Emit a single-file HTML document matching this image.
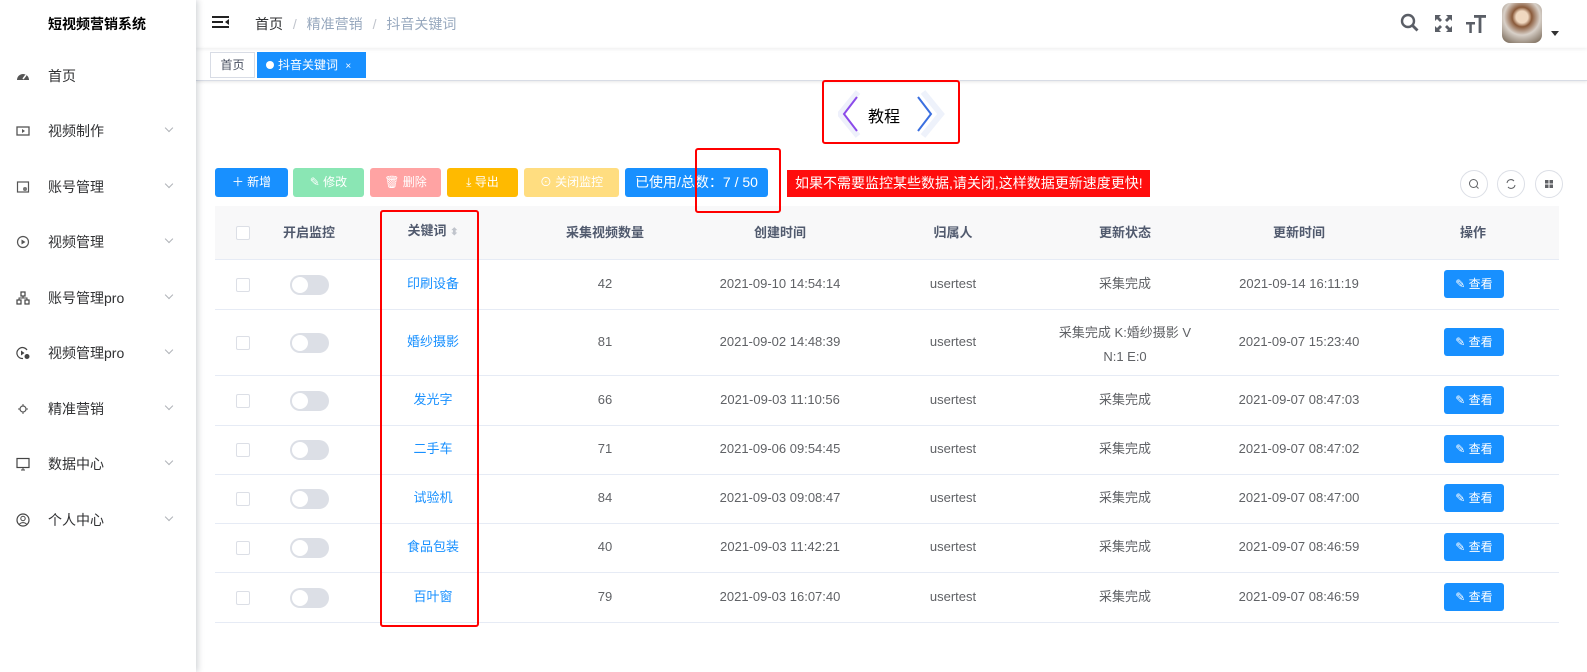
<!DOCTYPE html>
<html><head><meta charset="utf-8"><style>
*{margin:0;padding:0;box-sizing:border-box}
body{width:1587px;height:672px;overflow:hidden;background:#fff;font-family:"Liberation Sans","Noto Sans CJK SC",sans-serif;font-size:13px;color:#606266;position:relative}
.a{position:absolute}
.side{left:0;top:0;width:196px;height:672px;background:#fff;box-shadow:2px 0 6px rgba(0,21,41,.18);z-index:2}
.mi{position:absolute;left:0;width:196px;height:20px;line-height:20px}
.mi .t{position:absolute;left:48px;font-size:14px;color:#303133}
.mi .ic{position:absolute;left:16px;top:3px;width:14px;height:14px}
.mi .ch{position:absolute;left:166px;top:4px;width:6px;height:6px;border-right:1px solid #b0b3b8;border-bottom:1px solid #b0b3b8;transform:rotate(45deg)}
.btn{position:absolute;top:168px;height:29px;line-height:29px;color:#fff;font-size:12px;border-radius:3px;text-align:center}
.td{position:absolute;text-align:center;color:#606266;font-size:13px;line-height:18px}
.cb{position:absolute;left:236px;width:14px;height:14px;border:1px solid #dcdfe6;border-radius:2px;background:#fff}
.sw{position:absolute;left:290px;width:39px;height:20px;border-radius:10px;background:#dcdfe6}
.sw:after{content:"";position:absolute;left:2px;top:2px;width:16px;height:16px;border-radius:50%;background:#fff}
.kw{color:#1890ff}
.vb{position:absolute;left:1444px;width:60px;height:28px;line-height:28px;background:#1890ff;color:#fff;border-radius:3px;font-size:12px;text-align:center}
.hl{position:absolute;left:215px;width:1344px;height:1px;background:#e6ebf5}
.rb{position:absolute;border:2px solid #f00;border-radius:3px;z-index:3}
.cir{position:absolute;top:170px;width:28px;height:28px;border:1px solid #dcdfe6;border-radius:50%}
</style></head><body>
<div class="a side">
<div class="a" style="left:48px;top:14px;font-size:14px;font-weight:bold;color:#000">短视频营销系统</div>
<div class="mi" style="top:66px"><svg class="ic" viewBox="0 0 14 14"><path d="M1 11a6 6 0 1 1 12 0z" fill="#555"/><path d="M7 10l3-4" stroke="#fff" stroke-width="1.5"/></svg><span class="t">首页</span></div>
<div class="mi" style="top:121px"><svg class="ic" viewBox="0 0 14 14"><rect x="1" y="3" width="12" height="8" fill="none" stroke="#555" stroke-width="1.3"/><path d="M6 5v4l3-2z" fill="#555"/></svg><span class="t">视频制作</span><i class="ch"></i></div>
<div class="mi" style="top:177px"><svg class="ic" viewBox="0 0 14 14"><rect x="1.5" y="2" width="11" height="10" fill="none" stroke="#555" stroke-width="1.2"/><circle cx="9" cy="9" r="2" fill="#777"/></svg><span class="t">账号管理</span><i class="ch"></i></div>
<div class="mi" style="top:232px"><svg class="ic" viewBox="0 0 14 14"><circle cx="7" cy="7" r="5.5" fill="none" stroke="#555" stroke-width="1.2"/><path d="M5.5 4.5v5l4-2.5z" fill="#555"/></svg><span class="t">视频管理</span><i class="ch"></i></div>
<div class="mi" style="top:288px"><svg class="ic" viewBox="0 0 14 14"><rect x="5" y="1" width="4" height="4" fill="none" stroke="#444" stroke-width="1.2"/><rect x="1" y="9" width="4" height="4" fill="none" stroke="#444" stroke-width="1.2"/><rect x="9" y="9" width="4" height="4" fill="none" stroke="#444" stroke-width="1.2"/><path d="M7 5v2M3 9V7h8v2" fill="none" stroke="#444"/></svg><span class="t">账号管理pro</span><i class="ch"></i></div>
<div class="mi" style="top:343px"><svg class="ic" viewBox="0 0 14 14"><path d="M11 4A5.5 5.5 0 1 0 7 12.5" fill="none" stroke="#444" stroke-width="1.2"/><path d="M5 4.5v5l3.5-2.5z" fill="#444"/><circle cx="11" cy="10.5" r="2.5" fill="#444"/></svg><span class="t">视频管理pro</span><i class="ch"></i></div>
<div class="mi" style="top:399px"><svg class="ic" viewBox="0 0 14 14"><circle cx="7" cy="7" r="3" fill="none" stroke="#555" stroke-width="1.2"/><path d="M7 2v2M7 10v2M2 7h2M10 7h2" stroke="#555"/></svg><span class="t">精准营销</span><i class="ch"></i></div>
<div class="mi" style="top:454px"><svg class="ic" viewBox="0 0 14 14"><rect x="1" y="1.5" width="12" height="9" fill="none" stroke="#444" stroke-width="1.2"/><path d="M5 13h4M7 10.5V13" stroke="#444"/></svg><span class="t">数据中心</span><i class="ch"></i></div>
<div class="mi" style="top:510px"><svg class="ic" viewBox="0 0 14 14"><circle cx="7" cy="7" r="6" fill="none" stroke="#444" stroke-width="1.2"/><circle cx="7" cy="5.5" r="2.2" fill="none" stroke="#444"/><path d="M3.3 11.3a4.5 4 0 0 1 7.4 0" fill="none" stroke="#444"/></svg><span class="t">个人中心</span><i class="ch"></i></div>
</div>
<!-- header -->
<div class="a" style="left:196px;top:0;width:1391px;height:48px;box-shadow:0 1px 4px rgba(0,21,41,.08)"></div>
<svg class="a" style="left:212px;top:15px" width="18" height="16" viewBox="0 0 18 16"><path d="M0 2h17M0 7h11M0 12h17" stroke="#222" stroke-width="2"/><path d="M17 4v6l-4-3z" fill="#222"/></svg>
<div class="a" style="left:255px;top:14px;font-size:14px;color:#303133">首页 <span style="color:#c0c4cc;margin:0 6px">/</span> <span style="color:#97a8be">精准营销</span> <span style="color:#c0c4cc;margin:0 6px">/</span> <span style="color:#97a8be">抖音关键词</span></div>
<svg class="a" style="left:1400px;top:13px" width="20" height="20" viewBox="0 0 20 20"><circle cx="8" cy="8" r="6" fill="none" stroke="#5a5e66" stroke-width="2.4"/><path d="M12.5 12.5l5 5" stroke="#5a5e66" stroke-width="2.8"/></svg>
<svg class="a" style="left:1434px;top:14px" width="19" height="19" viewBox="0 0 19 19" fill="#5a5e66"><path d="M1 1h6l-2 2 3 3-2 2-3-3-2 2zM18 1v6l-2-2-3 3-2-2 3-3-2-2zM1 18v-6l2 2 3-3 2 2-3 3 2 2zM18 18h-6l2-2-3-3 2-2 3 3 2-2z"/></svg>
<svg class="a" style="left:1466px;top:15px" width="20" height="18" viewBox="0 0 20 18" fill="#5a5e66"><rect x="0" y="7" width="9" height="2.5"/><rect x="3.3" y="7" width="2.5" height="11"/><rect x="8" y="0" width="12" height="2.8"/><rect x="12.6" y="0" width="2.8" height="18"/></svg>
<div class="a" style="left:1502px;top:3px;width:40px;height:40px;border-radius:8px;background:radial-gradient(circle at 50% 35%,#f0d8c0 0 18%,#8a5a3a 30%,#d8d0c8 55%,#6b5a48 100%)"></div>
<div class="a" style="left:1551px;top:31px;width:0;height:0;border-left:4px solid transparent;border-right:4px solid transparent;border-top:5px solid #333"></div>
<!-- tags -->
<div class="a" style="left:196px;top:48px;width:1391px;height:33px;border-bottom:1px solid #d8dce5;box-shadow:0 1px 3px rgba(0,0,0,.1)"></div>
<div class="a" style="left:210px;top:52px;width:45px;height:26px;line-height:24px;border:1px solid #d8dce5;font-size:12px;color:#495060;text-align:center">首页</div>
<div class="a" style="left:257px;top:52px;width:109px;height:26px;line-height:26px;background:#1890ff;color:#fff;font-size:12px;padding-left:9px"><span style="display:inline-block;width:8px;height:8px;border-radius:50%;background:#fff;margin-right:4px"></span>抖音关键词 <span style="font-size:10px;margin-left:4px">×</span></div>
<!-- tutorial -->
<div class="rb" style="left:822px;top:80px;width:138px;height:64px"></div>
<svg class="a" style="left:838px;top:90px" width="110" height="48" viewBox="0 0 110 48"><path d="M20 2L2 24l18 22" fill="none" stroke="#eef0fb" stroke-width="6"/><path d="M19 7L6 24l13 17" fill="none" stroke="#8b4bea" stroke-width="2"/><path d="M85 2l18 22-18 22" fill="none" stroke="#eef2fb" stroke-width="6"/><path d="M80 7l13 17-13 17" fill="none" stroke="#3a6fe0" stroke-width="2"/></svg>
<div class="a" style="left:868px;top:103px;font-size:16px;color:#000">教程</div>
<!-- buttons -->
<div class="btn" style="left:215px;width:73px;background:#1890ff">＋ 新增</div>
<div class="btn" style="left:293px;width:71px;background:#8ae6b4">✎ 修改</div>
<div class="btn" style="left:370px;width:71px;background:#ffa3a3">🗑 删除</div>
<div class="btn" style="left:447px;width:71px;background:#ffba00">⤓ 导出</div>
<div class="btn" style="left:524px;width:95px;background:#ffdd80">⊙ 关闭监控</div>
<div class="btn" style="left:625px;width:143px;background:#1890ff;font-size:14px">已使用/总数：7 / 50</div>
<div class="rb" style="left:695px;top:148px;width:86px;height:65px"></div>
<div class="a" style="left:787px;top:170px;width:363px;height:27px;line-height:27px;background:#ff0d0d;color:#fff;font-size:14px;padding-left:8px">如果不需要监控某些数据,请关闭,这样数据更新速度更快!</div>
<div class="cir" style="left:1460px"><svg width="26" height="26" viewBox="0 0 26 26"><circle cx="12.5" cy="12.5" r="4" fill="none" stroke="#606266"/><path d="M15.5 15.5l2 2" stroke="#606266"/></svg></div>
<div class="cir" style="left:1497px"><svg width="26" height="26" viewBox="0 0 26 26"><path d="M9 12a4 4 0 0 1 7-2M17 14a4 4 0 0 1-7 2" fill="none" stroke="#606266"/></svg></div>
<div class="cir" style="left:1535px"><svg width="26" height="26" viewBox="0 0 26 26" fill="#606266"><rect x="9" y="9" width="3.5" height="3.5"/><rect x="13.5" y="9" width="3.5" height="3.5"/><rect x="9" y="13.5" width="3.5" height="3.5"/><rect x="13.5" y="13.5" width="3.5" height="3.5"/></svg></div>
<!-- table -->
<div class="a" style="left:215px;top:206px;width:1344px;height:53px;background:#f8f8f9"></div>
<div class="hl" style="top:259px"></div><div class="hl" style="top:309px"></div><div class="hl" style="top:375px"></div><div class="hl" style="top:425px"></div><div class="hl" style="top:474px"></div><div class="hl" style="top:523px"></div><div class="hl" style="top:572px"></div><div class="hl" style="top:622px"></div>
<div class="cb" style="top:226px"></div>
<div class="td" style="left:259px;width:100px;top:224px;font-weight:bold;color:#515a6e">开启监控</div>
<div class="td" style="left:383px;width:100px;top:222px;font-weight:bold;color:#515a6e">关键词 <span style="color:#c0c4cc;font-size:10px">⬍</span></div>
<div class="td" style="left:545px;width:120px;top:224px;font-weight:bold;color:#515a6e">采集视频数量</div>
<div class="td" style="left:720px;width:120px;top:224px;font-weight:bold;color:#515a6e">创建时间</div>
<div class="td" style="left:903px;width:100px;top:224px;font-weight:bold;color:#515a6e">归属人</div>
<div class="td" style="left:1055px;width:140px;top:224px;font-weight:bold;color:#515a6e">更新状态</div>
<div class="td" style="left:1229px;width:140px;top:224px;font-weight:bold;color:#515a6e">更新时间</div>
<div class="td" style="left:1423px;width:100px;top:224px;font-weight:bold;color:#515a6e">操作</div>
<div class="rb" style="left:380px;top:210px;width:99px;height:417px"></div>

<!-- rows -->
<div class="cb" style="top:278px"></div><div class="sw" style="top:275px"></div><div class="td kw" style="left:383px;width:100px;top:275px">印刷设备</div><div class="td" style="left:555px;width:100px;top:275px">42</div><div class="td" style="left:700px;width:160px;top:275px">2021-09-10 14:54:14</div><div class="td" style="left:903px;width:100px;top:275px">usertest</div><div class="td" style="left:1040px;width:170px;top:275px">采集完成</div><div class="td" style="left:1219px;width:160px;top:275px">2021-09-14 16:11:19</div><div class="vb" style="top:270px">✎ 查看</div>

<div class="cb" style="top:336px"></div><div class="sw" style="top:333px"></div><div class="td kw" style="left:383px;width:100px;top:333px">婚纱摄影</div><div class="td" style="left:555px;width:100px;top:333px">81</div><div class="td" style="left:700px;width:160px;top:333px">2021-09-02 14:48:39</div><div class="td" style="left:903px;width:100px;top:333px">usertest</div><div class="td" style="left:1050px;width:150px;top:321px;line-height:24px">采集完成 K:婚纱摄影 V<br>N:1 E:0</div><div class="td" style="left:1219px;width:160px;top:333px">2021-09-07 15:23:40</div><div class="vb" style="top:328px">✎ 查看</div>

<div class="cb" style="top:394px"></div><div class="sw" style="top:391px"></div><div class="td kw" style="left:383px;width:100px;top:391px">发光字</div><div class="td" style="left:555px;width:100px;top:391px">66</div><div class="td" style="left:700px;width:160px;top:391px">2021-09-03 11:10:56</div><div class="td" style="left:903px;width:100px;top:391px">usertest</div><div class="td" style="left:1040px;width:170px;top:391px">采集完成</div><div class="td" style="left:1219px;width:160px;top:391px">2021-09-07 08:47:03</div><div class="vb" style="top:386px">✎ 查看</div>

<div class="cb" style="top:443px"></div><div class="sw" style="top:440px"></div><div class="td kw" style="left:383px;width:100px;top:440px">二手车</div><div class="td" style="left:555px;width:100px;top:440px">71</div><div class="td" style="left:700px;width:160px;top:440px">2021-09-06 09:54:45</div><div class="td" style="left:903px;width:100px;top:440px">usertest</div><div class="td" style="left:1040px;width:170px;top:440px">采集完成</div><div class="td" style="left:1219px;width:160px;top:440px">2021-09-07 08:47:02</div><div class="vb" style="top:435px">✎ 查看</div>

<div class="cb" style="top:492px"></div><div class="sw" style="top:489px"></div><div class="td kw" style="left:383px;width:100px;top:489px">试验机</div><div class="td" style="left:555px;width:100px;top:489px">84</div><div class="td" style="left:700px;width:160px;top:489px">2021-09-03 09:08:47</div><div class="td" style="left:903px;width:100px;top:489px">usertest</div><div class="td" style="left:1040px;width:170px;top:489px">采集完成</div><div class="td" style="left:1219px;width:160px;top:489px">2021-09-07 08:47:00</div><div class="vb" style="top:484px">✎ 查看</div>

<div class="cb" style="top:541px"></div><div class="sw" style="top:538px"></div><div class="td kw" style="left:383px;width:100px;top:538px">食品包装</div><div class="td" style="left:555px;width:100px;top:538px">40</div><div class="td" style="left:700px;width:160px;top:538px">2021-09-03 11:42:21</div><div class="td" style="left:903px;width:100px;top:538px">usertest</div><div class="td" style="left:1040px;width:170px;top:538px">采集完成</div><div class="td" style="left:1219px;width:160px;top:538px">2021-09-07 08:46:59</div><div class="vb" style="top:533px">✎ 查看</div>

<div class="cb" style="top:591px"></div><div class="sw" style="top:588px"></div><div class="td kw" style="left:383px;width:100px;top:588px">百叶窗</div><div class="td" style="left:555px;width:100px;top:588px">79</div><div class="td" style="left:700px;width:160px;top:588px">2021-09-03 16:07:40</div><div class="td" style="left:903px;width:100px;top:588px">usertest</div><div class="td" style="left:1040px;width:170px;top:588px">采集完成</div><div class="td" style="left:1219px;width:160px;top:588px">2021-09-07 08:46:59</div><div class="vb" style="top:583px">✎ 查看</div>
</body></html>
